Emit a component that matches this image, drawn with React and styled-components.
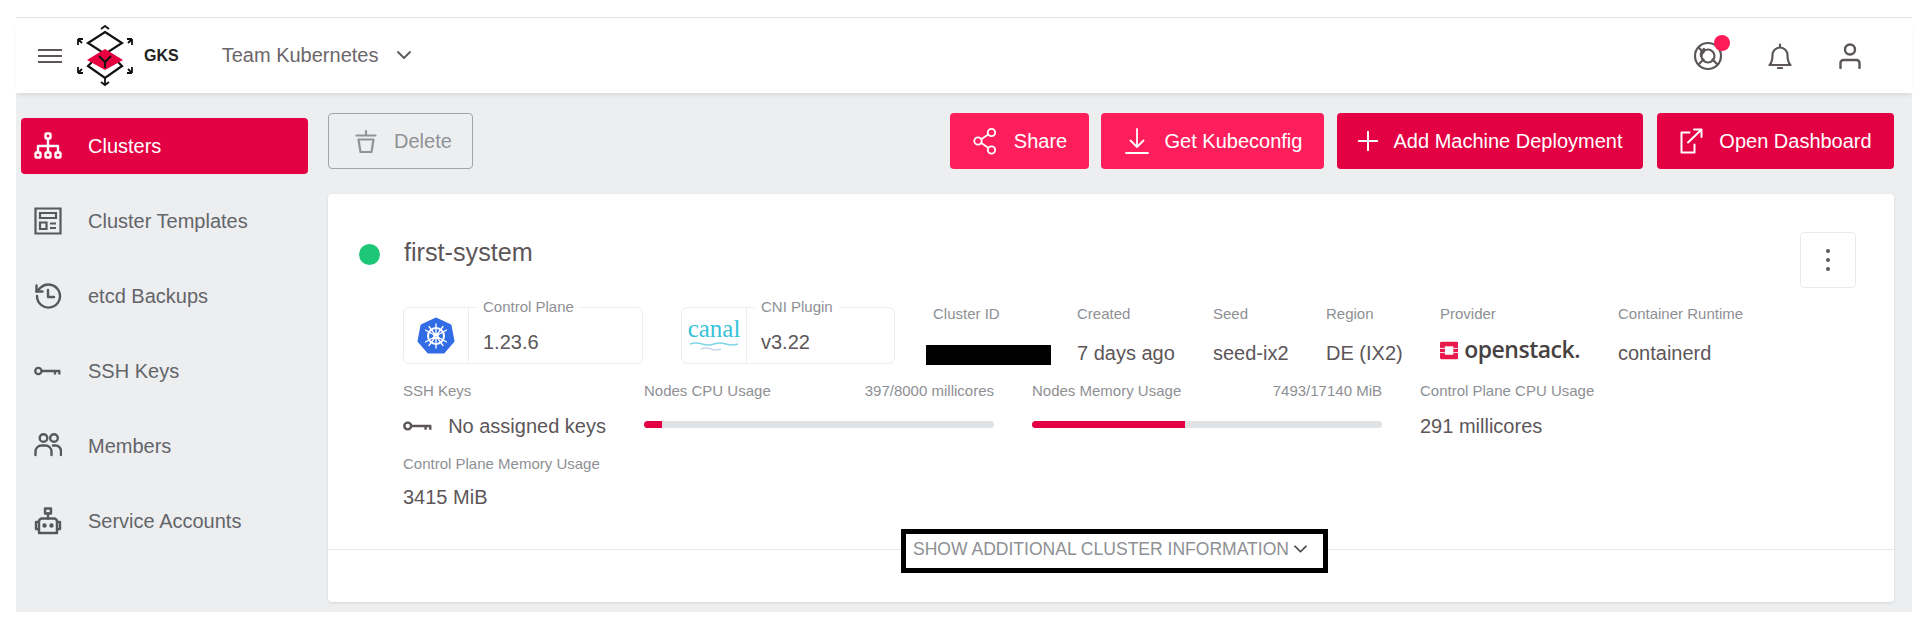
import styled, { createGlobalStyle } from "styled-components";

const GlobalStyle = createGlobalStyle`
  html, body {
    margin: 0;
    background: #fff;
    font-family: "Liberation Sans", Arial, sans-serif;
    color: #5c5659;
  }
  * { box-sizing: border-box; }
`;

const Stroke = ({ size = 28, w = 28, h, children, sw = 2 }) => (
  <svg
    width={size}
    height={h || size}
    viewBox={`0 0 ${w} ${h || w}`}
    fill="none"
    stroke="currentColor"
    strokeWidth={sw}
    strokeLinecap="round"
    strokeLinejoin="round"
  >
    {children}
  </svg>
);

const SitemapIcon = () => (
  <Stroke sw={2.400}>
    <rect x="11.500" y="1.500" width="5" height="5" rx="1" />
    <rect x="1.500" y="20.500" width="5" height="5" rx="1" />
    <rect x="11.500" y="20.500" width="5" height="5" rx="1" />
    <rect x="21.500" y="20.500" width="5" height="5" rx="1" />
    <path d="M14 6.500v14M4 20.500v-6.500h20v6.500" />
  </Stroke>
);

const TemplateIcon = () => (
  <Stroke sw={2.200}>
    <path d="M1.500 1.500h25v25h-25z" strokeLinejoin="miter" />
    <path d="M6 6h16v5H6zM6 15.500h6.500V22H6z" strokeLinejoin="miter" />
    <path d="M16 16.500h6M16 21h6" strokeLinecap="butt" />
  </Stroke>
);

const HistoryIcon = () => (
  <Stroke sw={2.400}>
    <path d="M3 14a11.500 11.500 0 1 0 3.600-8.300L2.500 9.500" />
    <path d="M2.500 3.500v6h6" />
    <path d="M14 8v7h6" />
  </Stroke>
);

const KeyIcon = ({ size = 32 }) => (
  <Stroke size={size} w={32} h={size * 0.5} sw={2.600}>
    <svg viewBox="0 0 32 16" x="0" y="0" width="32" height="16">
      <circle cx="5" cy="8" r="3.600" />
      <path d="M9 8h21M24 8v4M29 8v4" strokeLinecap="butt" />
    </svg>
  </Stroke>
);

const MembersIcon = () => (
  <Stroke sw={2.400}>
    <circle cx="9.500" cy="6" r="3.800" />
    <circle cx="20" cy="6" r="3.800" />
    <path d="M1.500 23v-3.500a6 6 0 0 1 6-6h4a6 6 0 0 1 6 6V23" />
    <path d="M19 13.500h2.500a5.500 5.500 0 0 1 5.500 5.500v4" />
  </Stroke>
);

const RobotIcon = () => (
  <Stroke sw={2.400}>
    <rect x="11" y="1.500" width="6" height="5" />
    <path d="M14 6.500v5" />
    <path d="M8 11.500h12a3 3 0 0 1 3 3V26H5V14.500a3 3 0 0 1 3-3z" />
    <path d="M5 15H2v7h3M23 15h3v7h-3" />
    <circle cx="10.500" cy="18.500" r="1" fill="currentColor" />
    <circle cx="17.500" cy="18.500" r="1" fill="currentColor" />
  </Stroke>
);

const BucketIcon = () => (
  <Stroke size={24} w={24} sw={2.200}>
    <path d="M2.500 6.500h19M12 2v4.500" />
    <path d="M4.500 10.500h15L17.500 23h-11z" />
  </Stroke>
);

const ShareIcon = () => (
  <Stroke size={28} w={28} sw={1.800}>
    <circle cx="19.500" cy="5.500" r="3.700" />
    <circle cx="6" cy="14" r="3.700" />
    <circle cx="19.500" cy="23" r="3.700" />
    <path d="M9.200 12.200l7-4.600M9.200 16l7 4.800" />
  </Stroke>
);

const DownloadIcon = () => (
  <Stroke size={28} w={28} sw={1.800}>
    <path d="M14 2v18M7.500 13.500L14 20l6.500-6.500M3 26h22" />
  </Stroke>
);

const PlusIcon = () => (
  <Stroke size={22} w={24} sw={2.200}>
    <path d="M12 2v20M2 12h20" />
  </Stroke>
);

const ExternalIcon = () => (
  <Stroke size={26} w={26} sw={2}>
    <path d="M10.500 4.500H2.500v20h13v-8" />
    <path d="M9 14.500L22 2M15 1.500h7.500V9" />
  </Stroke>
);

const MenuBars = () => (
  <Stroke size={26} w={26} h={16} sw={2}>
    <path d="M1 2h24M1 8h24M1 14h24" strokeLinecap="butt" />
  </Stroke>
);

const Chevron = ({ size = 14 }) => (
  <Stroke size={size} w={14} h={size * 0.6} sw={1.800}>
    <svg viewBox="0 0 14 8.400" width="14" height="8.400">
      <path d="M1 1l6 6 6-6" />
    </svg>
  </Stroke>
);

const LifeBuoyIcon = () => (
  <Stroke size={30} w={30} sw={2.200}>
    <circle cx="15" cy="15" r="13" />
    <circle cx="15" cy="15" r="6.500" />
    <path d="M5.500 6.500l5 5M5.500 23.500l5-5M24.500 23.500l-5-5" />
    <path d="M8 15a7 7 0 0 1 3-7" />
  </Stroke>
);

const BellIcon = () => (
  <Stroke size={26} w={26} sw={2.200}>
    <path d="M13 1.500v2M5.500 12a7.500 7.500 0 0 1 15 0c0 5 1 8 3 10H2.500c2-2 3-5 3-10z" />
    <path d="M11 25h4" />
  </Stroke>
);

const PersonIcon = () => (
  <Stroke size={26} w={26} sw={2.400}>
    <circle cx="13" cy="6.500" r="5" />
    <path d="M3.500 25v-5a3 3 0 0 1 3-3h13a3 3 0 0 1 3 3v5" />
  </Stroke>
);

const Logo = () => (
  <svg width="58" height="62" viewBox="0 0 58 62" fill="none" stroke="#111" strokeWidth="2.200">
    <path d="M29 7L46 18 29 29 12 18z" />
    <path d="M17 36L12 41 29 53 46 41 41 36" />
    <path d="M29 24L47 35 29 45 11 35z" fill="#e6003f" stroke="none" />
    <path d="M29 37v6M23 31l6 6 6-6" strokeWidth="2" />
    <path d="M25 4l4-3 4 3M29 52v8M25 57l4 3 4-3" strokeWidth="1.800" />
    <path d="M2 14h5M2 14v6M2 14l4 4M56 14h-5M56 14v6M56 14l-4 4" strokeWidth="1.800" />
    <path d="M2 48h5M2 48v-6M2 48l4-4M56 48h-5M56 48v-6M56 48l-4-4" strokeWidth="1.800" />
  </svg>
);

const KubeLogo = () => (
  <svg width="38" height="37" viewBox="0 0 38 37">
    <path
      d="M19 2L33 8.500 36 24 26.500 35H11.500L2 24 5 8.500z"
      fill="#326ce5"
      stroke="#326ce5"
      strokeWidth="3"
      strokeLinejoin="round"
    />
    <g fill="none" stroke="#fff">
      <circle cx="19" cy="19" r="8" strokeWidth="2" />
      <circle cx="19" cy="19" r="2" strokeWidth="1.500" />
      <path
        d="M19 7v24M8.500 13l21 12M8.500 25l21-12M12 9.500l14 19M26 9.500l-14 19"
        strokeWidth="1.300"
        strokeLinecap="round"
      />
    </g>
  </svg>
);

const OpenstackMark = () => (
  <svg width="26" height="25" viewBox="0 0 26 25">
    <rect width="26" height="25" rx="2" fill="#e8194d" />
    <rect x="7" y="6.500" width="12" height="12" fill="#fff" />
    <path d="M0 9.500h7M0 15.500h7M19 9.500h7M19 15.500h7" stroke="#fff" strokeWidth="1.300" />
  </svg>
);

const Page = styled.div`
  width: 1912px;
  padding: 17px 0 0 16px;
`;

const Shell = styled.div`
  border-top: 1px solid #e3e3e3;
`;

const Header = styled.header`
  position: relative;
  z-index: 1;
  height: 75px;
  display: flex;
  align-items: center;
  padding: 0 49px 0 21px;
  background: #fff;
  box-shadow: 0 4px 4px -2px rgba(0, 0, 0, 0.1);
`;

const Burger = styled.span`
  display: flex;
  color: #5c5659;
  margin-right: 13px;
`;

const Brand = styled.span`
  font-size: 16px;
  font-weight: 700;
  color: #222;
  margin-left: 10px;
`;

const Team = styled.span`
  font-size: 20px;
  color: #6b666a;
  margin-left: 43px;
`;

const TeamChevron = styled.span`
  display: flex;
  margin-left: 19px;
  color: #5c5659;
`;

const HeaderIcons = styled.div`
  margin-left: auto;
  display: flex;
  align-items: center;
  gap: 44px;
  color: #5c5659;
`;

const HeaderIcon = styled.span`
  position: relative;
  display: flex;
`;

const Badge = styled.span`
  position: absolute;
  top: -6px;
  right: -7px;
  width: 16px;
  height: 16px;
  border-radius: 50%;
  background: #ff1a58;
`;

const Main = styled.div`
  display: grid;
  grid-template-columns: 312px 1fr;
  background: #edeef0;
  padding-bottom: 10px;
`;

const Sidebar = styled.nav`
  display: flex;
  flex-direction: column;
  gap: 19px;
  padding: 25px 20px 0 5px;
`;

const NavItem = styled.a`
  height: 56px;
  display: flex;
  align-items: center;
  gap: 26px;
  padding-left: 13px;
  border-radius: 4px;
  font-size: 20px;
  color: ${(p) => (p.$active ? "#fff" : "#63656a")};
  background: ${(p) => (p.$active ? "#e30043" : "transparent")};
`;

const NavIcon = styled.span`
  width: 28px;
  display: flex;
  justify-content: center;
  color: ${(p) => (p.$active ? "#fff" : "#55595e")};
`;

const Content = styled.main`
  padding: 20px 18px 0 0;
`;

const Toolbar = styled.div`
  display: flex;
  align-items: center;
  height: 56px;
  margin-bottom: 25px;
`;

const GhostButton = styled.button`
  height: 56px;
  width: 145px;
  display: flex;
  align-items: center;
  gap: 16px;
  padding: 0 0 0 25px;
  border: 1px solid #a2a6ab;
  border-radius: 4px;
  background: transparent;
  font: inherit;
  font-size: 20px;
  color: #8f9296;
  margin-right: auto;
`;

const ActionButton = styled.button`
  height: 56px;
  width: ${(p) => p.$width}px;
  margin-left: ${(p) => p.$gap}px;
  display: flex;
  align-items: center;
  justify-content: center;
  gap: 14px;
  border: 0;
  border-radius: 4px;
  background: ${(p) => (p.$bright ? "#ff1e5c" : "#e30043")};
  color: #fff;
  font: inherit;
  font-size: 20px;
  white-space: nowrap;
`;

const Card = styled.section`
  background: #fff;
  border-radius: 4px;
  box-shadow: 0 1px 3px rgba(0, 0, 0, 0.1);
  padding: 38px 0 29px;
`;

const CardHead = styled.div`
  display: flex;
  justify-content: space-between;
  padding: 0 38px 0 31px;
  height: 56px;
`;

const TitleRow = styled.div`
  display: flex;
  align-items: center;
  gap: 24px;
  height: 44px;
`;

const StatusDot = styled.span`
  width: 21px;
  height: 21px;
  border-radius: 50%;
  background: #1ec677;
`;

const Title = styled.h2`
  margin: 0 0 3px;
  font-size: 25.200px;
  font-weight: 400;
  color: #5c5659;
`;

const MoreButton = styled.button`
  width: 56px;
  height: 56px;
  display: flex;
  flex-direction: column;
  align-items: center;
  justify-content: center;
  gap: 5px;
  border: 1px solid #e9e9ea;
  border-radius: 4px;
  background: #fff;
`;

const Dot = styled.i`
  width: 4px;
  height: 4px;
  border-radius: 50%;
  background: #55595e;
`;

const Facts = styled.div`
  width: 1397px;
  margin: 17px 0 0 75px;
  display: flex;
  flex-wrap: wrap;
  align-items: flex-start;
  column-gap: 38px;
  row-gap: 17px;
`;

const Fact = styled.div`
  width: ${(p) => (p.$width ? `${p.$width}px` : "auto")};
`;

const Label = styled.div`
  font-size: 15px;
  line-height: 18px;
  color: #8e9094;
  white-space: nowrap;
`;

const LabelRow = styled.div`
  display: flex;
  justify-content: space-between;
`;

const Value = styled.div`
  display: flex;
  align-items: center;
  gap: 15px;
  margin-top: ${(p) => p.$gap}px;
  height: 24px;
  font-size: 20px;
  color: #5c5659;
  white-space: nowrap;
`;

const Redacted = styled.div`
  width: 125px;
  height: 20px;
  margin: 22px 0 0 -7px;
  background: #000;
`;

const Chip = styled.div`
  position: relative;
  width: ${(p) => p.$width}px;
  height: 57px;
  margin-top: 2px;
  display: flex;
  border: 1.500px solid #ecedee;
  border-radius: 6px;
`;

const ChipLogo = styled.div`
  width: 65px;
  flex: none;
  display: flex;
  align-items: center;
  justify-content: center;
  border-right: 1.500px solid #ecedee;
`;

const ChipValue = styled.div`
  padding: 21px 0 0 14px;
  font-size: 20px;
  line-height: 26px;
`;

const ChipLabel = styled.span`
  position: absolute;
  top: -10px;
  left: 73px;
  padding: 0 6px;
  background: #fff;
  font-size: 15px;
  line-height: 18px;
  color: #8e9094;
`;

const Canal = styled.div`
  display: flex;
  flex-direction: column;
  align-items: center;
  margin-top: -3px;
`;

const CanalWord = styled.span`
  font-family: "Liberation Serif", serif;
  font-size: 25px;
  line-height: 26px;
  color: #35c3d9;
`;

const Provider = styled.div`
  display: flex;
  align-items: center;
  gap: 6px;
  margin-top: 15px;
  height: 25px;
`;

const ProviderName = styled.span`
  font-family: "Open Sans", sans-serif;
  font-size: 23px;
  font-weight: 600;
  letter-spacing: -0.500px;
  color: #474142;
  margin-top: -4px;
`;

const Bar = styled.div`
  height: 7px;
  margin-top: 21px;
  border-radius: 4px;
  background: #e0e3e6;
  overflow: hidden;
`;

const BarFill = styled.div`
  height: 100%;
  background: #e30043;
`;

const Footer = styled.div`
  display: flex;
  align-items: flex-start;
  margin-top: 20px;
`;

const FooterRule = styled.div`
  height: 1px;
  margin-top: 20px;
  flex: ${(p) => (p.$width ? `0 0 ${p.$width}px` : "1")};
  background: #e8e8e9;
`;

const ExpandBox = styled.div`
  flex: none;
  width: 427px;
  height: 44px;
  display: flex;
  align-items: center;
  gap: 5px;
  padding: 0 0 4px 7px;
  border: 5px solid #000;
  font-size: 17.550px;
  color: #8e9094;
  white-space: nowrap;
`;

const ExpandChevron = styled.span`
  display: flex;
  color: #4a4a4c;
`;

const navItems = [
  { label: "Clusters", Icon: SitemapIcon, active: true },
  { label: "Cluster Templates", Icon: TemplateIcon },
  { label: "etcd Backups", Icon: HistoryIcon },
  { label: "SSH Keys", Icon: KeyIcon },
  { label: "Members", Icon: MembersIcon },
  { label: "Service Accounts", Icon: RobotIcon },
];

const actions = [
  { label: "Share", Icon: ShareIcon, width: 139, gap: 0, bright: true },
  { label: "Get Kubeconfig", Icon: DownloadIcon, width: 223, gap: 12, bright: true },
  { label: "Add Machine Deployment", Icon: PlusIcon, width: 306, gap: 13 },
  { label: "Open Dashboard", Icon: ExternalIcon, width: 237, gap: 14 },
];

const simpleFacts = [
  { label: "Created", value: "7 days ago", width: 98 },
  { label: "Seed", value: "seed-ix2", width: 75 },
  { label: "Region", value: "DE (IX2)", width: 76 },
];

const usage = [
  { label: "Nodes CPU Usage", used: 397, total: 8000, unit: "millicores", fill: 5 },
  { label: "Nodes Memory Usage", used: 7493, total: 17140, unit: "MiB", fill: 43.700 },
];

const App = () => {
  return (
    <Page>
      <GlobalStyle />
      <Shell>
        <Header>
          <Burger>
            <MenuBars />
          </Burger>
          <Logo />
          <Brand>GKS</Brand>
          <Team>Team Kubernetes</Team>
          <TeamChevron>
            <Chevron />
          </TeamChevron>
          <HeaderIcons>
            <HeaderIcon>
              <LifeBuoyIcon />
              <Badge />
            </HeaderIcon>
            <HeaderIcon>
              <BellIcon />
            </HeaderIcon>
            <HeaderIcon>
              <PersonIcon />
            </HeaderIcon>
          </HeaderIcons>
        </Header>
        <Main>
          <Sidebar>
            {navItems.map(({ label, Icon, active }) => (
              <NavItem key={label} $active={active}>
                <NavIcon $active={active}>
                  <Icon />
                </NavIcon>
                {label}
              </NavItem>
            ))}
          </Sidebar>
          <Content>
            <Toolbar>
              <GhostButton>
                <BucketIcon />
                Delete
              </GhostButton>
              {actions.map(({ label, Icon, width, gap, bright }) => (
                <ActionButton key={label} $width={width} $gap={gap} $bright={bright}>
                  <Icon />
                  {label}
                </ActionButton>
              ))}
            </Toolbar>
            <Card>
              <CardHead>
                <TitleRow>
                  <StatusDot />
                  <Title>first-system</Title>
                </TitleRow>
                <MoreButton>
                  <Dot />
                  <Dot />
                  <Dot />
                </MoreButton>
              </CardHead>
              <Facts>
                <Chip $width={240}>
                  <ChipLogo>
                    <KubeLogo />
                  </ChipLogo>
                  <ChipLabel>Control Plane</ChipLabel>
                  <ChipValue>1.23.6</ChipValue>
                </Chip>
                <Chip $width={214}>
                  <ChipLogo>
                    <Canal>
                      <CanalWord>canal</CanalWord>
                      <svg width="50" height="10" viewBox="0 0 50 10" fill="none" strokeWidth="1.500">
                        <path d="M1 2q6-2 12 0t12 0 12 0 12 0" stroke="#7fd6e4" />
                        <path d="M12 7q5-2 10 0t10 0" stroke="#c9d3ea" />
                      </svg>
                    </Canal>
                  </ChipLogo>
                  <ChipLabel>CNI Plugin</ChipLabel>
                  <ChipValue>v3.22</ChipValue>
                </Chip>
                <Fact $width={106}>
                  <Label>Cluster ID</Label>
                  <Redacted />
                </Fact>
                {simpleFacts.map((fact) => (
                  <Fact key={fact.label} $width={fact.width}>
                    <Label>{fact.label}</Label>
                    <Value $gap={18}>{fact.value}</Value>
                  </Fact>
                ))}
                <Fact $width={140}>
                  <Label>Provider</Label>
                  <Provider>
                    <OpenstackMark />
                    <ProviderName>openstack.</ProviderName>
                  </Provider>
                </Fact>
                <Fact>
                  <Label>Container Runtime</Label>
                  <Value $gap={18}>containerd</Value>
                </Fact>
                <Fact $width={203}>
                  <Label>SSH Keys</Label>
                  <Value $gap={14}>
                    <KeyIcon />
                    No assigned keys
                  </Value>
                </Fact>
                {usage.map((item) => (
                  <Fact key={item.label} $width={350}>
                    <LabelRow>
                      <Label>{item.label}</Label>
                      <Label>
                        {item.used}/{item.total} {item.unit}
                      </Label>
                    </LabelRow>
                    <Bar>
                      <BarFill style={{ width: `${item.fill}%` }} />
                    </Bar>
                  </Fact>
                ))}
                <Fact>
                  <Label>Control Plane CPU Usage</Label>
                  <Value $gap={14}>291 millicores</Value>
                </Fact>
                <Fact>
                  <Label>Control Plane Memory Usage</Label>
                  <Value $gap={12}>3415 MiB</Value>
                </Fact>
              </Facts>
              <Footer>
                <FooterRule $width={573} />
                <ExpandBox>
                  SHOW ADDITIONAL CLUSTER INFORMATION
                  <ExpandChevron>
                    <Chevron size={13} />
                  </ExpandChevron>
                </ExpandBox>
                <FooterRule />
              </Footer>
            </Card>
          </Content>
        </Main>
      </Shell>
    </Page>
  );
};

export default App;
